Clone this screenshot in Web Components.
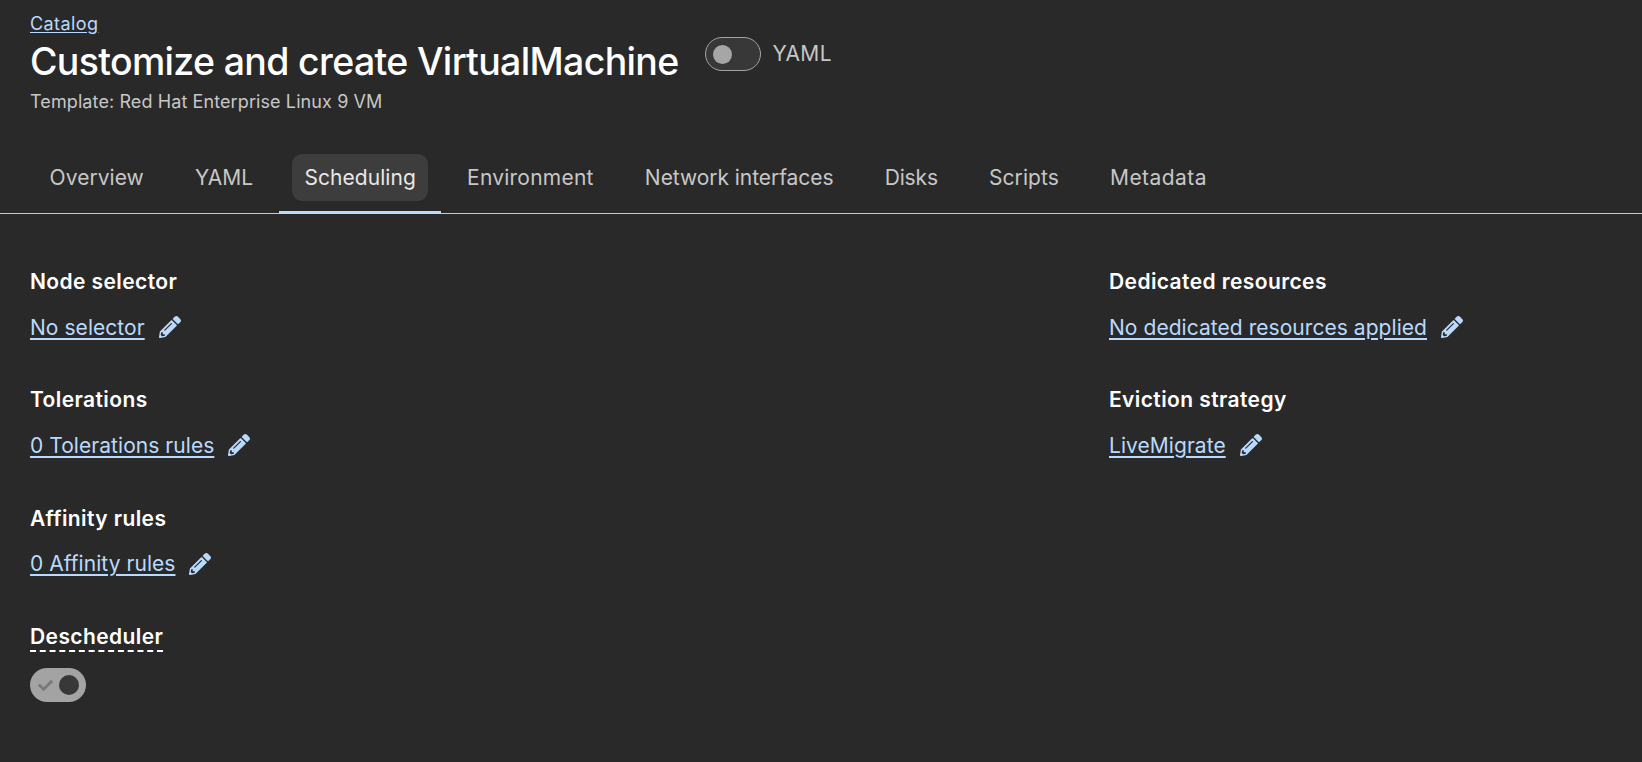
<!DOCTYPE html>
<html lang="en">
<head>
<meta charset="utf-8">
<title>Customize and create VirtualMachine</title>
<style>
  html, body { margin: 0; height: 100%; background: #292929; }
  body { font-family: "Inter", "Noto Sans", sans-serif; color: #fff; overflow: hidden; }
</style>
</head>
<body>
<vm-page></vm-page>

<script>
const PENCIL = `<svg viewBox="0 0 512 512" width="22" height="22" fill="currentColor" aria-hidden="true"><path d="M497.9 142.1l-46.1 46.1c-4.7 4.7-12.3 4.7-17 0l-111-111c-4.7-4.7-4.7-12.3 0-17l46.1-46.1c18.7-18.7 49.1-18.7 67.9 0l60.1 60.1c18.8 18.7 18.8 49.1 0 67.9zM284.2 99.8L21.6 362.4.4 483.9c-2.9 16.4 11.4 30.6 27.8 27.8l121.5-21.3 262.6-262.6c4.7-4.7 4.7-12.3 0-17l-111-111c-4.8-4.7-12.4-4.7-17.1 0zM124.1 339.9c-5.5-5.5-5.5-14.3 0-19.8l154-154c5.5-5.5 14.3-5.5 19.8 0s5.5 14.3 0 19.8l-154 154c-5.5 5.5-14.3 5.5-19.8 0zM88 424h48v36.3l-64.5 11.3-31.1-31.1L51.7 376H88v48z"/></svg>`;

const CHECK = `<svg viewBox="0 0 512 512" width="15" height="15" fill="currentColor" aria-hidden="true"><path d="M173.898 439.404l-166.4-166.4c-9.997-9.997-9.997-26.206 0-36.204l36.203-36.204c9.997-9.998 26.207-9.998 36.204 0L192 312.69 432.095 72.596c9.997-9.997 26.207-9.997 36.204 0l36.203 36.204c9.997 9.997 9.997 26.206 0 36.204l-294.4 294.401c-9.998 9.997-26.207 9.997-36.204-.001z"/></svg>`;

class VmSwitch extends HTMLElement {
  constructor() {
    super();
    this.attachShadow({ mode: "open" });
  }

  connectedCallback() {
    const checked = this.hasAttribute("checked");
    this.shadowRoot.innerHTML = `
      <style>
        :host { display: inline-flex; align-items: center; gap: 12px; }
        .track {
          box-sizing: border-box;
          width: 56px;
          height: 34px;
          border-radius: 17px;
          display: flex;
          align-items: center;
          padding: 0 7px;
          border: 1px solid #a3a3a3;
          background: #383838;
        }
        .knob { width: 19px; height: 19px; border-radius: 50%; background: #a6a6a6; }
        .on { background: #a3a3a3; border: 0; justify-content: space-between; padding: 0 7px 0 8px; color: #797979; }
        .on .knob { background: #383838; width: 20px; height: 20px; }
        .label { font-size: 21px; color: #c7c7c7; letter-spacing: 0.3px; padding-bottom: 2px; }
      </style>
      <div class="track ${checked ? "on" : ""}">
        ${checked ? CHECK : ""}
        <div class="knob"></div>
      </div>
      <span class="label"><slot></slot></span>
    `;
  }
}

class VmHeader extends HTMLElement {
  constructor() {
    super();
    this.attachShadow({ mode: "open" });
  }

  connectedCallback() {
    this.shadowRoot.innerHTML = `
      <style>
        :host { display: block; padding: 12px 30px 0; height: 142px; box-sizing: border-box; }
        a { font-size: 18px; line-height: 24px; color: #b9dafc; text-decoration: underline; text-underline-offset: 2px; letter-spacing: 0.4px; display: block; width: max-content; }
        .row { display: flex; align-items: flex-start; gap: 26px; height: 52px; }
        h1 { margin: 0; font-size: 37.5px; line-height: 52px; font-weight: 500; color: #fff; letter-spacing: -0.67px; white-space: nowrap; }
        vm-switch { margin-top: 1px; --switch-gap: 13px; }
        p { margin: 2px 0 0; font-size: 18px; line-height: 24px; color: #c7c7c7; letter-spacing: 0.1px; }
      </style>
      <a href="#">Catalog</a>
      <div class="row">
        <h1>Customize and create VirtualMachine</h1>
        <vm-switch>YAML</vm-switch>
      </div>
      <p>Template: Red Hat Enterprise Linux 9 VM</p>
    `;
  }
}

class VmTabs extends HTMLElement {
  constructor() {
    super();
    this.attachShadow({ mode: "open" });
  }

  connectedCallback() {
    const active = this.getAttribute("active");
    const names = this.getAttribute("tabs").split(",");
    const tabs = names.map((name) => `
      <li class="${name === active ? "current" : ""}"><span>${name}</span></li>
    `).join("");
    this.shadowRoot.innerHTML = `
      <style>
        :host { display: block; }
        ul { list-style: none; margin: 0; padding: 0 0 0 24px; display: flex; height: 71px; border-bottom: 1px solid #c7c7c7; }
        li { padding: 12px 13px 0; height: 59px; position: relative; }
        span { display: block; padding: 0 12.6px; height: 47px; line-height: 47px; border-radius: 10px; font-size: 21px; color: #c7c7c7; letter-spacing: 0.05px; white-space: nowrap; }
        li:nth-child(4) span { letter-spacing: 0.23px; }
        li:nth-child(5) span { letter-spacing: -0.05px; }
        li:nth-child(6) span { letter-spacing: -0.15px; }
        li:nth-child(8) span { letter-spacing: 0.45px; }
        .current span { background: #3d3d3d; color: #e8e8e8; }
        .current::after { content: ""; position: absolute; left: 0; right: 0; bottom: -1px; height: 3px; background: #b9dafc; }
      </style>
      <ul>${tabs}</ul>
    `;
  }
}

class VmDetail extends HTMLElement {
  constructor() {
    super();
    this.attachShadow({ mode: "open" });
  }

  connectedCallback() {
    const title = this.getAttribute("title");
    const dashed = this.hasAttribute("help");
    this.shadowRoot.innerHTML = `
      <style>
        :host { display: block; height: 118.4px; }
        h3 { margin: 0; font-size: 21px; line-height: 30px; font-weight: 600; color: #fff; letter-spacing: 0.4px; width: max-content; }
        h3.help { border-bottom: 2px dashed #fff; line-height: 27px; margin-top: 1px; }
        .value { display: flex; align-items: center; margin-top: 15px; height: 30px; }
        h3.help + .value { margin-top: 15px; height: 36px; }
      </style>
      <h3 class="${dashed ? "help" : ""}">${title}</h3>
      <div class="value"><slot></slot></div>
    `;
  }
}

class VmEditLink extends HTMLElement {
  constructor() {
    super();
    this.attachShadow({ mode: "open" });
  }

  connectedCallback() {
    this.shadowRoot.innerHTML = `
      <style>
        :host { display: inline-flex; align-items: center; gap: 14px; color: #b9dafc; }
        a { font-size: 21px; color: inherit; text-decoration: underline; text-underline-offset: 3px; letter-spacing: 0.05px; }
        svg { display: block; }
      </style>
      <a href="#"><slot></slot></a>
      ${PENCIL}
    `;
  }
}

class VmPage extends HTMLElement {
  constructor() {
    super();
    this.attachShadow({ mode: "open" });
  }

  connectedCallback() {
    this.shadowRoot.innerHTML = `
      <style>
        :host { display: block; }
        main { display: grid; grid-template-columns: 1079px 1fr; padding: 53px 30px 0; }
      </style>
      <vm-header></vm-header>
      <vm-tabs active="Scheduling" tabs="Overview,YAML,Scheduling,Environment,Network interfaces,Disks,Scripts,Metadata"></vm-tabs>
      <main>
        <div>
          <vm-detail title="Node selector"><vm-edit-link>No selector</vm-edit-link></vm-detail>
          <vm-detail title="Tolerations"><vm-edit-link>0 Tolerations rules</vm-edit-link></vm-detail>
          <vm-detail title="Affinity rules"><vm-edit-link>0 Affinity rules</vm-edit-link></vm-detail>
          <vm-detail title="Descheduler" help><vm-switch checked></vm-switch></vm-detail>
        </div>
        <div>
          <vm-detail title="Dedicated resources"><vm-edit-link>No dedicated resources applied</vm-edit-link></vm-detail>
          <vm-detail title="Eviction strategy"><vm-edit-link>LiveMigrate</vm-edit-link></vm-detail>
        </div>
      </main>
    `;
  }
}

customElements.define("vm-switch", VmSwitch);
customElements.define("vm-header", VmHeader);
customElements.define("vm-tabs", VmTabs);
customElements.define("vm-detail", VmDetail);
customElements.define("vm-edit-link", VmEditLink);
customElements.define("vm-page", VmPage);
</script>
</body>
</html>
